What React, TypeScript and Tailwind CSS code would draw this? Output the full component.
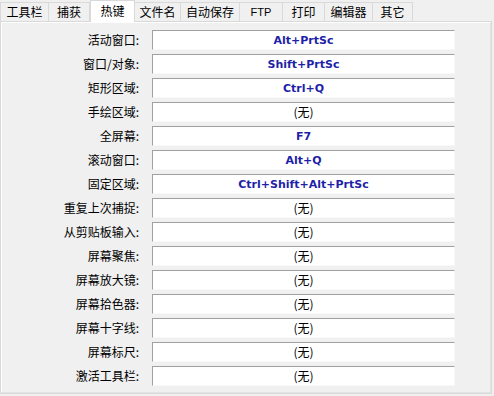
const tabs = [
  { label: '工具栏', w: 'w-[49px]' },
  { label: '捕获', w: 'w-[41px]' },
  { label: '热键', w: 'w-[45px]', active: true },
  { label: '文件名', w: 'w-[46px]' },
  { label: '自动保存', w: 'w-[59px]' },
  { label: 'FTP', w: 'w-[43px]' },
  { label: '打印', w: 'w-[42px]' },
  { label: '编辑器', w: 'w-[48px]' },
  { label: '其它', w: 'w-[40px]' },
];

const rows: [string, string | null][] = [
  ['活动窗口:', 'Alt+PrtSc'],
  ['窗口/对象:', 'Shift+PrtSc'],
  ['矩形区域:', 'Ctrl+Q'],
  ['手绘区域:', null],
  ['全屏幕:', 'F7'],
  ['滚动窗口:', 'Alt+Q'],
  ['固定区域:', 'Ctrl+Shift+Alt+PrtSc'],
  ['重复上次捕捉:', null],
  ['从剪贴板输入:', null],
  ['屏幕聚焦:', null],
  ['屏幕放大镜:', null],
  ['屏幕拾色器:', null],
  ['屏幕十字线:', null],
  ['屏幕标尺:', null],
  ['激活工具栏:', null],
];

export default function App() {
  return (
    <div className="w-[494px] h-[396px] bg-[#f0f0f0] text-[12px] text-black font-['Noto_Sans_CJK_SC',sans-serif] overflow-hidden">
      {/* tab strip */}
      <div className="relative z-10 flex items-end h-[21px]">
        {tabs.map((t) =>
          t.active ? (
            <div
              key={t.label}
              className={`${t.w} h-[22px] -mb-px bg-white border border-b-0 border-[#d9d9d9] flex items-center justify-center leading-none pb-[2px]`}
            >
              {t.label}
            </div>
          ) : (
            <div
              key={t.label}
              className={`${t.w} h-[19px] bg-[#f0f0f0] border border-b-0 border-l-0 first:border-l border-[#d9d9d9] flex items-center justify-center leading-none`}
            >
              {t.label === 'FTP' ? (
                <span className="font-['Liberation_Sans',sans-serif] text-[11px]">FTP</span>
              ) : (
                t.label
              )}
            </div>
          )
        )}
      </div>

      {/* panel */}
      <div className="w-[492px] h-[373px] border border-[#d9d9d9] bg-[#f0f0f0]">
        <div className="h-full border border-white border-r-[#e3e3e3] border-b-[#e3e3e3] pt-[5px]">
          {rows.map(([label, key]) => (
            <div key={label} className="flex items-center h-[24px]">
              <div className="w-[137px] text-right leading-none">{label}</div>
              <div className="ml-[13px] w-[303px] h-[20px] bg-white border-t border-l border-[#a0a0a0] border-r border-b border-r-[#f8f8f8] border-b-[#f8f8f8] flex items-center justify-center leading-none">
                {key ? (
                  <span className="font-['DejaVu_Sans',sans-serif] font-bold text-[11px] text-[#1f1fa8]">{key}</span>
                ) : (
                  <span>(无)</span>
                )}
              </div>
            </div>
          ))}
        </div>
      </div>
    </div>
  );
}
